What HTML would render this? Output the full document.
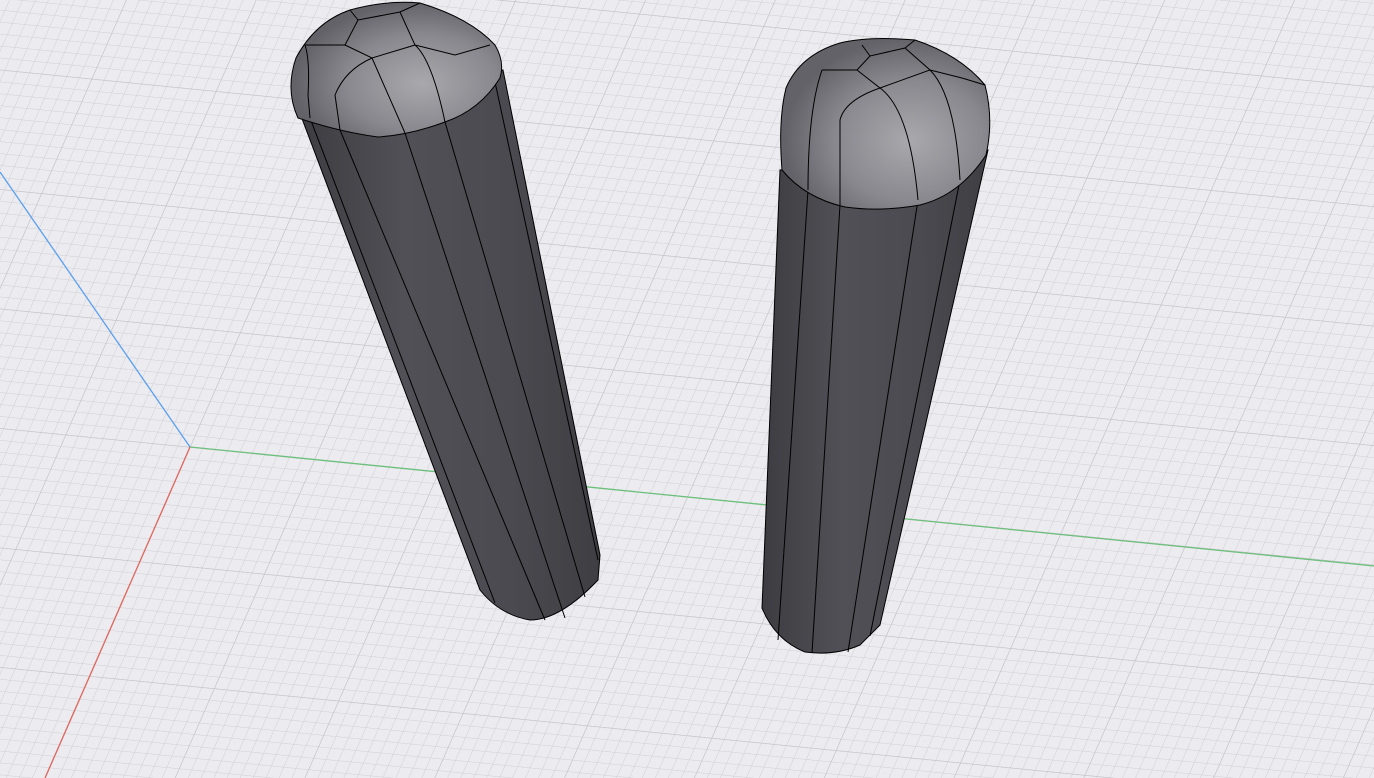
<!DOCTYPE html>
<html><head><meta charset="utf-8"><style>
html,body{margin:0;padding:0;background:#ecebef;overflow:hidden}
svg{display:block}
</style></head><body>
<svg width="1374" height="778" viewBox="0 0 1374 778" xmlns="http://www.w3.org/2000/svg">
<defs>
<pattern id="g" width="12.5" height="12.5" patternUnits="userSpaceOnUse" patternTransform="matrix(0.995,0.099,-0.401,0.916,190,447)">
<path d="M0 0H12.5M0 0V12.5" stroke="#cfced4" stroke-width="1" fill="none"/>
</pattern>
<pattern id="G" width="125" height="125" patternUnits="userSpaceOnUse" patternTransform="matrix(0.995,0.099,-0.401,0.916,190,447)">
<path d="M0 0H125M0 0V125" stroke="#c2c1c7" stroke-width="1.2" fill="none"/>
</pattern>
<linearGradient id="body1" x1="0" y1="0" x2="1" y2="0">
<stop offset="0" stop-color="#3c3c41"/><stop offset="0.35" stop-color="#505056"/><stop offset="0.7" stop-color="#4a4a50"/><stop offset="1" stop-color="#3e3e43"/>
</linearGradient>
<radialGradient id="cap1" cx="0.62" cy="0.6" r="0.6">
<stop offset="0" stop-color="#a8a8ad"/><stop offset="0.6" stop-color="#88888e"/><stop offset="1" stop-color="#626268"/>
</radialGradient>
</defs>
<rect width="1374" height="778" fill="#ecebef"/>
<rect width="1374" height="778" fill="url(#g)"/>
<rect width="1374" height="778" fill="url(#G)"/>
<line x1="190" y1="447" x2="0" y2="172" stroke="#5aa0f0" stroke-width="1.3"/>
<line x1="190" y1="447" x2="1374" y2="566" stroke="#6cc07c" stroke-width="1.3"/>
<line x1="190" y1="447" x2="45" y2="778" stroke="#e0675e" stroke-width="1.3"/>

<!-- left cylinder -->
<g stroke="#000" stroke-width="1" fill="none">
<path d="M298 108 L480 590 Q500 615 530 620 Q560 620 598 580 L600 555 L503 70 Z" fill="url(#body1)"/>
<path d="M310 118 L495 603 M340 130 L545 620 M405 133 L565 618 M445 122 L585 597 M495 82 L598 560"/>
<path d="M298 118 Q285 90 296 58 Q315 22 350 10 Q385 0 420 3 Q470 18 495 45 Q505 62 500 78 Q480 110 445 122 Q410 135 378 137 Q340 132 298 118 Z" fill="url(#cap1)"/>
<path d="M350 10 L358 20 L400 12 L420 3 M358 20 L345 45 L305 45 M345 45 L372 58 L415 45 L400 12 M415 45 L455 55 L490 45 M372 58 Q345 70 335 95 L340 130 M415 45 Q432 60 445 122 M372 58 L405 133 M305 45 Q310 60 308 95 L310 118"/>
</g>

<!-- right cylinder -->
<g stroke="#000" stroke-width="1" fill="none">
<path d="M780 170 L762 608 Q775 640 805 652 Q835 656 860 645 L880 625 L988 150 Z" fill="url(#body1)"/>
<path d="M808 190 L778 640 M840 205 L812 653 M918 200 L848 652 M960 180 L870 636"/>
<path d="M782 170 Q778 120 786 88 Q800 55 840 43 Q870 36 915 40 Q960 55 985 85 Q994 120 986 155 Q960 195 920 205 Q880 212 845 207 Q805 198 782 170 Z" fill="url(#cap1)"/>
<path d="M862 45 L870 56 L905 48 L915 40 M870 56 L857 70 L822 70 M857 70 L880 88 L930 70 L905 48 M930 70 L962 78 L985 85 M880 88 Q845 100 840 120 L840 205 M880 88 Q910 110 918 200 M822 70 Q808 110 808 190 M930 70 Q955 95 960 180"/>
</g>
</svg>
</body></html>
